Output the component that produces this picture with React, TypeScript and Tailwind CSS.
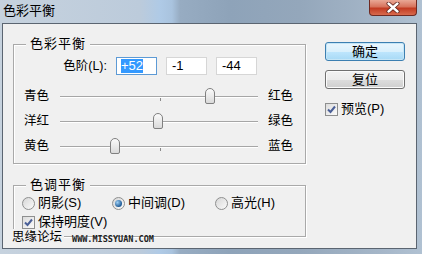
import * as React from 'react'

// Photoshop "色彩平衡" dialog, Win7 look

const FONT = "font-['Liberation_Sans','Noto_Sans_CJK_SC',sans-serif]"

const sliders = [
  { left: '青色', right: '红色', value: 52 },
  { left: '洋红', right: '绿色', value: -1 },
  { left: '黄色', right: '蓝色', value: -44 },
]

function CheckBox({ checked = true }: { checked?: boolean }) {
  return (
    <span className="flex h-[13px] w-[13px] items-center justify-center border border-[#8e8f8f] bg-[linear-gradient(135deg,#dcdcdc,#fbfbfb)]">
      {checked && (
        <svg width="11" height="11" viewBox="0 0 11 11">
          <path d="M2 5.5 L4.5 8 L9 2.5" fill="none" stroke="#4a5f97" strokeWidth="2" />
        </svg>
      )}
    </span>
  )
}

function Radio({ checked = false }: { checked?: boolean }) {
  return (
    <span className="flex h-[13px] w-[13px] items-center justify-center rounded-full border border-[#8e8f8f] bg-[linear-gradient(135deg,#d6d6d6,#fbfbfb)]">
      {checked && (
        <span className="h-[7px] w-[7px] rounded-full bg-[radial-gradient(circle_at_35%_35%,#9fd0f5,#1d5a96_70%)]" />
      )}
    </span>
  )
}

function Slider({ value }: { value: number }) {
  const center = 99 + (value / 100) * 99
  return (
    <div className="relative h-[25px] w-[198px]">
      <div className="absolute left-0 right-0 top-[12px] h-px bg-[#a6a6a6]" />
      <div className="absolute left-0 right-0 top-[13px] h-px bg-white" />
      <div className="absolute left-[100px] top-[14px] h-[3px] w-px bg-[#8a8a8a]" />
      <div
        className="absolute top-[4px] h-[16px] w-[10px] rounded-t-[5px] rounded-b-[2px] border border-[#808080] bg-[linear-gradient(180deg,#fbfbfb,#dadada)]"
        style={{ left: center - 5 }}
      />
    </div>
  )
}

function Group({ title, className, children }: { title: string; className?: string; children: React.ReactNode }) {
  return (
    <div className={`relative border border-[#a9a9a9] shadow-[inset_1px_1px_0_#fff,1px_1px_0_#fff] ${className ?? ''}`}>
      <span className="absolute left-[12px] top-[-8px] bg-[#f0f0f0] px-[4px] text-[13px] leading-[14px] tracking-[1px]">
        {title}
      </span>
      {children}
    </div>
  )
}

function WinButton({ label, primary = false }: { label: string; primary?: boolean }) {
  return (
    <div
      className={`flex h-[19px] w-[80px] items-center justify-center rounded-[3px] border text-[13px] leading-none ${
        primary
          ? 'border-[#3c7fb1] bg-[linear-gradient(180deg,#eaf6fd_0%,#d9f0fc_50%,#bee6fd_51%,#a7d9f5_100%)] shadow-[inset_0_0_0_1px_#c4e5f6]'
          : 'border-[#707070] bg-[linear-gradient(180deg,#f2f2f2_0%,#ebebeb_50%,#dddddd_51%,#cfcfcf_100%)] shadow-[inset_0_0_0_1px_#fbfbfb]'
      }`}
    >
      {label}
    </div>
  )
}

export default function App() {
  return (
    <div
      className={`relative flex h-[254px] w-[422px] flex-col overflow-hidden bg-[linear-gradient(90deg,#c6d2de_0px,#bccbdb_140px,#afcae6_160px,#a9c3de_172px,#97acc2_180px,#8ea3b9_230px,#94a7bb_300px,#a5b6c8_380px,#b0c1d2_422px)] text-black ${FONT}`}
    >
      {/* title bar */}
      <div className="flex h-[23px] shrink-0 items-start justify-between">
        <span className="pl-[3px] pt-[4px] text-[13px] leading-[14px]">色彩平衡</span>
        <div className="mr-[5px] flex h-[16px] w-[48px] items-center justify-center rounded-b-[4px] border border-t-0 border-[#6f2a22] bg-[linear-gradient(180deg,#e9a896_0%,#d7735c_45%,#c23b22_55%,#d86a4e_100%)]">
          <svg width="14" height="11" viewBox="0 0 14 11">
            <path d="M2.5 1.5 L11.5 9.5 M11.5 1.5 L2.5 9.5" stroke="#5a1f18" strokeWidth="4" strokeLinecap="round" />
            <path d="M2.5 1.5 L11.5 9.5 M11.5 1.5 L2.5 9.5" stroke="#fff" strokeWidth="2.4" strokeLinecap="round" />
          </svg>
        </div>
      </div>

      {/* client area */}
      <div className="ml-[2px] mr-[5px] flex h-[226px] shrink-0 border border-[#5b6571] bg-[#f0f0f0] pl-[10px] pt-[18px] text-[12.5px]">
        <div className="mt-[2px] flex w-[293px] flex-col">
          <Group title="色彩平衡" className="h-[120px]">
            <div className="mt-[12px] flex h-[18px] items-center">
              <span className="w-[102px] pr-[9px] text-right text-[12.5px]">色阶(L):</span>
              <div className="flex gap-[9px]">
                <div className="flex h-[18px] w-[41px] items-center border border-[#5d9ad5] bg-white pl-[4px]">
                  <span className="bg-[#3399ff] text-[13px] leading-[14px] text-white">+52</span>
                </div>
                <div className="flex h-[18px] w-[41px] items-center border border-[#d6d6d6] bg-white pl-[5px] text-[13px]">-1</div>
                <div className="flex h-[18px] w-[41px] items-center border border-[#d6d6d6] bg-white pl-[5px] text-[13px]">-44</div>
              </div>
            </div>
            <div className="mt-[9px] flex flex-col">
              {sliders.map((s) => (
                <div key={s.left} className="flex h-[25px] items-center pl-[10px]">
                  <span className="w-[36px]">{s.left}</span>
                  <Slider value={s.value} />
                  <span className="ml-[10px]">{s.right}</span>
                </div>
              ))}
            </div>
          </Group>

          <Group title="色调平衡" className="mt-[21px] h-[52px]">
            <div className="mt-[9px] flex h-[16px] items-center pl-[8px] text-[13px]">
              <div className="flex w-[90px] items-center gap-[3px]">
                <Radio />
                <span>阴影(S)</span>
              </div>
              <div className="flex w-[103px] items-center gap-[3px]">
                <Radio checked />
                <span>中间调(D)</span>
              </div>
              <div className="flex items-center gap-[3px]">
                <Radio />
                <span>高光(H)</span>
              </div>
            </div>
            <div className="mt-[3px] flex h-[16px] items-center gap-[3px] pl-[8px] text-[13px]">
              <CheckBox />
              <span>保持明度(V)</span>
            </div>
          </Group>
        </div>

        <div className="ml-[19px] flex w-[80px] flex-col">
          <WinButton label="确定" primary />
          <div className="mt-[9px]">
            <WinButton label="复位" />
          </div>
          <div className="mt-[12px] flex h-[16px] items-center gap-[3px] text-[13px]">
            <CheckBox />
            <span>预览(P)</span>
          </div>
        </div>
      </div>

      {/* watermark */}
      <div className="absolute left-[10px] top-[229px] flex items-end gap-[8px]">
        <span className="bg-[#f0f0f0] px-[2px] text-[12.5px] leading-[16px]">思缘论坛</span>
        <span className="pb-[1px] font-['DejaVu_Sans_Mono',monospace] text-[8.5px] font-bold leading-[10px] text-[#222]">
          WWW.MISSYUAN.COM
        </span>
      </div>
    </div>
  )
}
